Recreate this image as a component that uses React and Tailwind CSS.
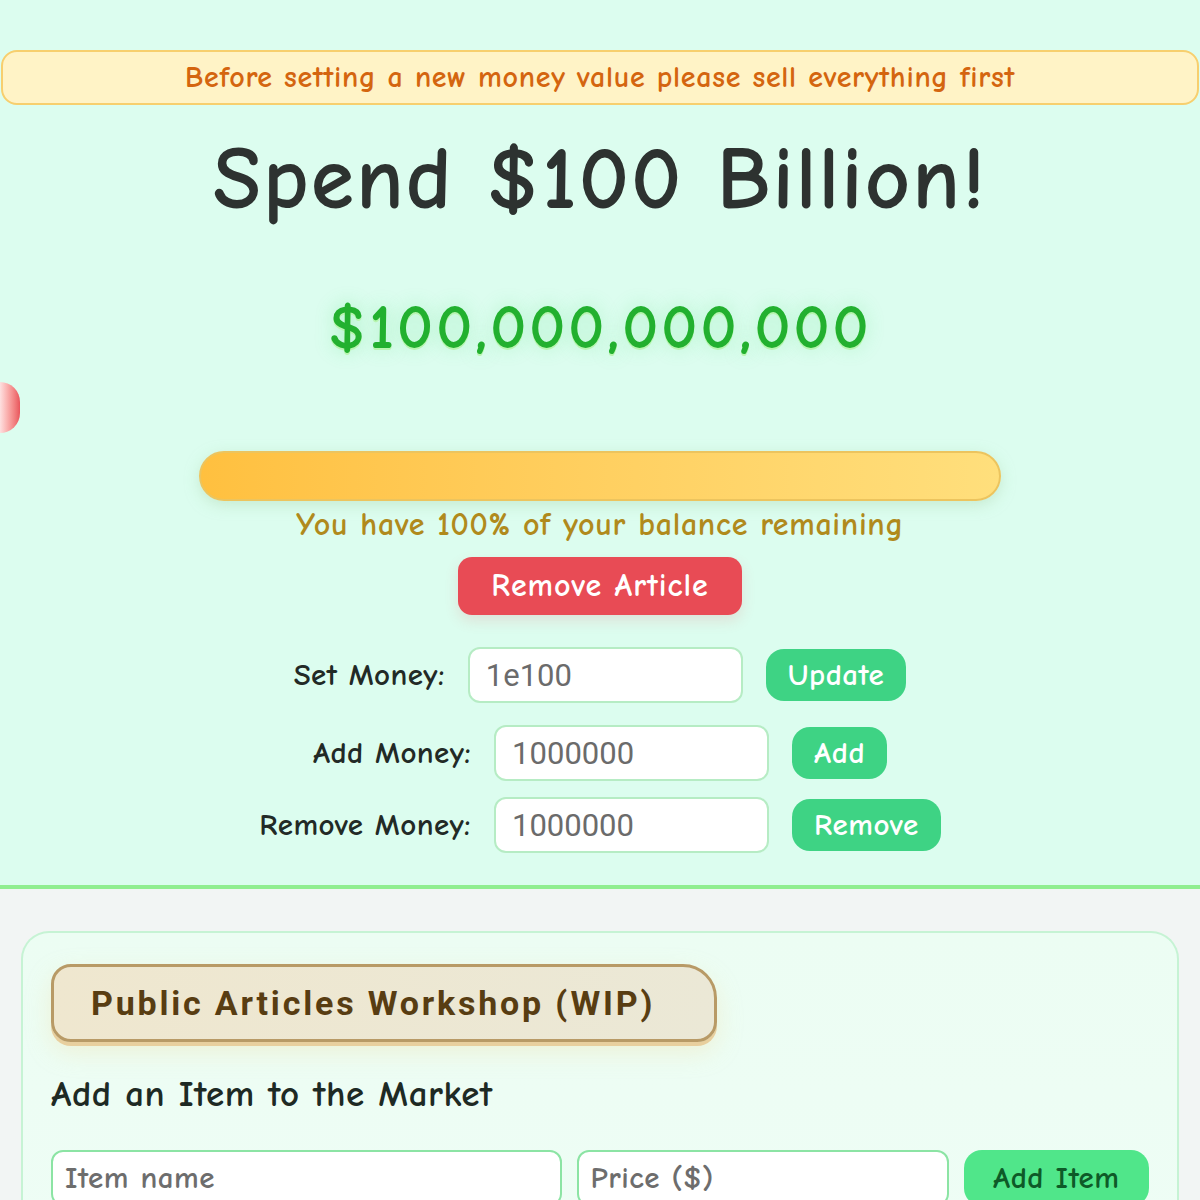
import React from "react";

const comic = "font-['Comic_Neue','Comic_Sans_MS','Noto_Sans',sans-serif]";

function MoneyRow({ label, value, action, className }) {
  return (
    <div className={`flex items-center justify-center gap-[23px] ${className}`}>
      <span className="text-[31px] font-bold tracking-[0.4px] text-[#222a26]">{label}</span>
      <input
        readOnly
        value={value}
        className="w-[275px] h-[56px] rounded-[12px] border-2 border-[#b6ecc4] bg-white px-4 text-[31px] text-[#6b6b6b] font-['Roboto',sans-serif] outline-none"
      />
      <button className="h-[52px] px-[22px] rounded-[18px] bg-[#3ed384] text-white font-bold tracking-[0.5px] text-[31px]">
        {action}
      </button>
    </div>
  );
}

export default function App() {
  return (
    <div className={`h-[1200px] overflow-hidden bg-[#f2f5f4] ${comic}`}>
      <section className="relative bg-[#dcfdef] pt-[50px] pb-[32px]">
        <div className="mx-px h-[55px] rounded-[16px] border-2 border-[#f7cf6e] bg-[#fff3c6] flex items-center justify-center text-[30px] font-bold tracking-[0.7px] text-[#d4650f]">
          Before setting a new money value please sell everything first
        </div>

        <h1 className="mt-[25px] text-center text-[88px] font-bold leading-[100px] tracking-[2px] text-[#2d3230]">
          Spend $100 Billion!
        </h1>

        <div className="mt-[63px] text-center text-[63px] font-bold leading-[70px] tracking-[3px] text-[#22b02f] [text-shadow:0_2px_0_#b8f5b0,0_0_18px_rgba(80,220,120,0.35)]">
          $100,000,000,000
        </div>

        <div className="absolute left-0 top-[382px] h-[51px] w-[20px] rounded-r-full bg-gradient-to-r from-[#fde0e0] to-[#e8555c]" />

        <div className="mt-[88px] mx-auto w-[802px] h-[50px] rounded-full border-2 border-[#ecc45e] bg-gradient-to-r from-[#ffc03f] to-[#ffdf7c] shadow-[0_4px_14px_rgba(180,220,180,0.5)]" />

        <p className="mt-[6px] text-center text-[32px] font-bold leading-[36px] tracking-[0.7px] text-[#b08a1c]">
          You have 100% of your balance remaining
        </p>

        <div className="mt-[14px] flex justify-center">
          <button className="w-[284px] h-[58px] rounded-[14px] bg-[#e84b55] text-white font-bold tracking-[1px] text-[32px] shadow-[0_6px_14px_rgba(232,75,85,0.15)]">
            Remove Article
          </button>
        </div>

        <MoneyRow className="mt-[32px]" label="Set Money:" value="1e100" action="Update" />
        <MoneyRow className="mt-[22px]" label="Add Money:" value="1000000" action="Add" />
        <MoneyRow className="mt-[16px]" label="Remove Money:" value="1000000" action="Remove" />
      </section>

      <div className="h-[4px] bg-[#90ee90]" />

      <div className="px-[21px] pt-[42px]">
        <div className="rounded-t-[28px] border-2 border-b-0 border-[#c6f3d4] bg-gradient-to-b from-[#ecfdf3] to-[#eefdf5] px-[28px] pt-[31px] pb-10">
          <div className="inline-flex h-[78px] w-[666px] items-center rounded-[20px] rounded-tr-[34px] border-[3px] border-[#b89a66] bg-gradient-to-r from-[#efe7cf] to-[#ebe8d6] pl-[37px] shadow-[0_4px_0_#e8cf9e,0_10px_24px_rgba(240,220,160,0.35)]">
            <span className="font-['Roboto',sans-serif] font-bold text-[34px] tracking-[2.8px] text-[#583d12]">
              Public Articles Workshop (WIP)
            </span>
          </div>

          <h2 className="mt-[30px] text-[37px] font-bold leading-[44px] tracking-[0.5px] text-[#1e2a24]">
            Add an Item to the Market
          </h2>

          <div className="mt-[34px] flex items-start gap-[15px]">
            <input
              readOnly
              placeholder="Item name"
              className="w-[512px] h-[56px] rounded-[12px] border-2 border-[#8ce4a4] bg-white px-3 text-[31px] font-bold tracking-[0.5px] placeholder:text-[#6d6d6d] outline-none"
            />
            <input
              readOnly
              placeholder="Price ($)"
              className="w-[373px] h-[56px] rounded-[12px] border-2 border-[#8ce4a4] bg-white px-3 text-[31px] font-bold tracking-[0.5px] placeholder:text-[#6d6d6d] outline-none"
            />
            <button className="w-[186px] h-[56px] rounded-[18px] bg-[#50e68a] text-[31px] font-bold tracking-[0.5px] text-[#0e5a28]">
              Add Item
            </button>
          </div>
        </div>
      </div>
    </div>
  );
}
